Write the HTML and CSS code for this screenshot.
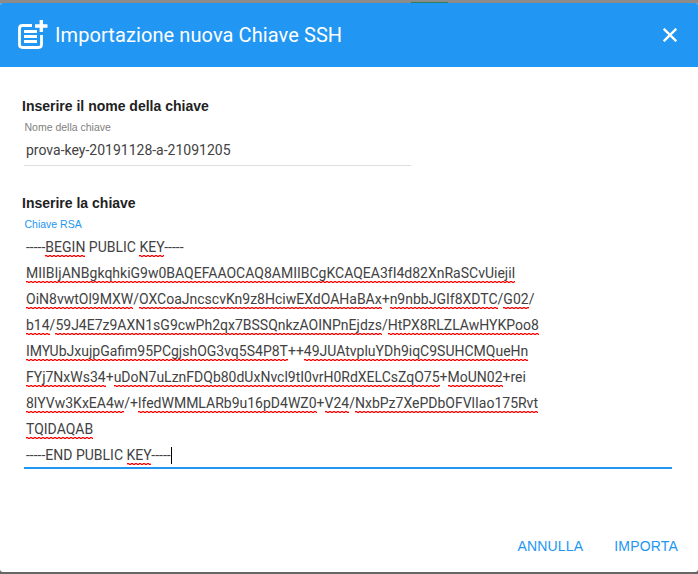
FILE: index.html
```html
<!DOCTYPE html>
<html lang="it">
<head>
<meta charset="utf-8">
<title>Importazione nuova Chiave SSH</title>
<link rel="stylesheet" href="styles.css">
</head>
<body>
<div class="backdrop-accent"></div>
<main class="dialog">
  <header class="toolbar">
    <svg class="icon-add" viewBox="0 0 32 32" aria-hidden="true">
      <path d="M16 6.500H6.500Q3.500 6.500 3.500 9.500V25.500Q3.500 28.500 6.500 28.500H22.500Q25.500 28.500 25.500 25.500V16" fill="none" stroke="#fff" stroke-width="2.800"/>
      <path d="M25.300 1v12M19 7h12.500" fill="none" stroke="#fff" stroke-width="3.400"/>
      <path d="M8 12.500h13M8 17.500h13M8 22.500h13" fill="none" stroke="#fff" stroke-width="3"/>
    </svg>
    <h1 class="title">Importazione nuova Chiave SSH</h1>
    <svg class="icon-close" viewBox="0 0 14 14" aria-hidden="true"><path d="M.7.7l12.600 12.600M13.300.7L.7 13.300" stroke="#fff" stroke-width="2.300"/></svg>
  </header>
  <section class="content">
    <h2 class="heading"><span>Inserire il nome della chiave</span></h2>
    <div class="field field-name">
      <label class="label">Nome della chiave</label>
      <div class="value name-value"><span>prova-key-20191128-a-21091205</span></div>
    </div>
    <h2 class="heading heading-key"><span>Inserire la chiave</span></h2>
    <div class="field field-key">
      <label class="label label-active">Chiave RSA</label>
      <div class="value key">
        <div>-----<u>BEGIN</u> PUBLIC <u>KEY</u>-----</div>
        <div><u>MIIBIjANBgkqhkiG9w0BAQEFAAOCAQ8AMIIBCgKCAQEA3fI4d82XnRaSCvUiejiI</u></div>
        <div><u>OiN8vwtOl9MXW</u>/<u>OXCoaJncscvKn9z8HciwEXdOAHaBAx</u>+<u>n9nbbJGIf8XDTC</u>/<u>G02</u>/</div>
        <div><u>b14</u>/<u>59J4E7z9AXN1sG9cwPh2qx7BSSQnkzAOINPnEjdzs</u>/<u>HtPX8RLZLAwHYKPoo8</u></div>
        <div><u>IMYUbJxujpGafim95PCgjshOG3vq5S4P8T</u>++<u>49JUAtvpluYDh9iqC9SUHCMQueHn</u></div>
        <div><u>FYj7NxWs34</u>+<u>uDoN7uLznFDQb80dUxNvcl9tI0vrH0RdXELCsZqO75</u>+<u>MoUN02</u>+rei</div>
        <div><u>8lYVw3KxEA4w</u>/+<u>lfedWMMLARb9u16pD4WZ0</u>+<u>V24</u>/<u>NxbPz7XePDbOFVlIao175Rvt</u></div>
        <div><u>TQIDAQAB</u></div>
        <div>-----END PUBLIC <u>KEY</u>-----<i class="caret"></i></div>
      </div>
    </div>
  </section>
  <footer class="actions"><button>ANNULLA</button><button>IMPORTA</button></footer>
</main>
</body>
</html>
```
FILE: styles.css
```css
* { box-sizing: border-box; }
body { margin: 0; height: 574px; overflow: hidden; padding: 3px 0 2px; background: linear-gradient(#8c8c8c 50%, #666 50%); font-family: Roboto, sans-serif; }
.backdrop-accent { position: absolute; top: 2px; left: 411px; width: 37px; height: 1px; background: #2d8060; }
.dialog { height: 569px; display: flex; flex-direction: column; background: #fff; border-radius: 3px; overflow: hidden; }
.toolbar { height: 64px; flex: none; display: flex; align-items: center; padding: 0 21px 0 16px; background: #2296f3; color: #fff; }
.icon-add { width: 32px; height: 32px; overflow: visible; flex: none; }
.title { margin: 0 auto 0 7px; font-size: 20px; font-weight: 400; line-height: 28px; letter-spacing: .09px; white-space: nowrap; }
.icon-close { width: 14px; height: 14px; }
.content { flex: 1; padding: 29px 26px 0 22px; }
.heading { margin: 0; font: 700 14px/20px "Liberation Sans", sans-serif; color: #212121; white-space: nowrap; }
.heading-key { margin-top: 27px; }
.field { margin-left: 2px; }
.field-name { width: 387px; height: 50px; border-bottom: 1px solid #ddd; }
.label { display: block; padding: 3px 0 0 .5px; font: 10.5px/16px "Liberation Sans", sans-serif; color: #808080; }
.label-active { color: #2296f3; }
.value { padding-left: 2px; font-size: 14px; line-height: 26px; color: #424242; white-space: nowrap; }
.name-value { padding-top: 2px; }
.field-key { height: 256px; border-bottom: 2px solid #2296f3; }
.key { padding-top: 2px; }
.key > div { height: 26px; }
.key u { text-decoration: none; padding-bottom: 2px; background: repeating-linear-gradient(90deg, #f00 0 2px, #f006 2px 4px) left calc(100% - 1px) / 100% 1px no-repeat, repeating-linear-gradient(90deg, #f006 0 2px, #f00 2px 4px) left bottom / 100% 1px no-repeat; }
.caret { display: inline-block; width: 1px; height: 17px; background: #000; vertical-align: -4px; }
.actions { height: 52px; display: flex; justify-content: flex-end; align-items: center; gap: 31px; padding-right: 20px; }
button { padding: 0; border: 0; background: none; color: #2296f3; font: 14px/20px "Liberation Sans", sans-serif; letter-spacing: .18px; }
```
